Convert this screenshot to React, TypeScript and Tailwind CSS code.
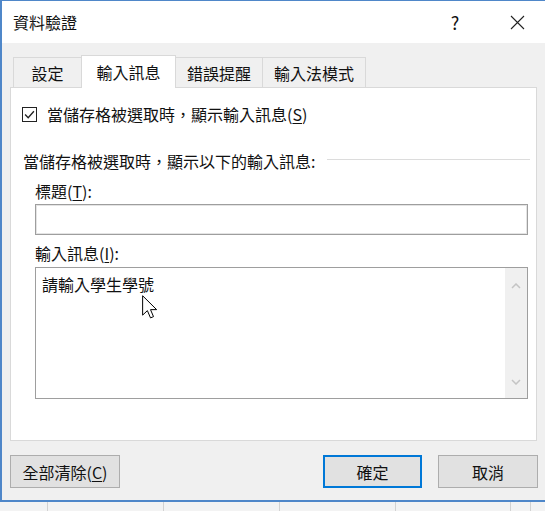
import React from 'react';

function Chevron({ up }: { up?: boolean }) {
  return (
    <svg width="10" height="6" viewBox="0 0 10 6">
      <path
        d={up ? 'M1 5 L5 1 L9 5' : 'M1 1 L5 5 L9 1'}
        fill="none"
        stroke="#c4c4c4"
        strokeWidth="1.5"
      />
    </svg>
  );
}

function Key({ k }: { k: string }) {
  return (
    <>
      (<span className="underline underline-offset-2">{k}</span>)
    </>
  );
}

export default function App() {
  return (
    <div className="w-[545px] h-[511px] overflow-hidden flex flex-col bg-[#f4f4f4] text-[16px] leading-[18px] text-[#111] font-['Noto_Sans_CJK_TC','Noto_Sans',sans-serif]">
      {/* Dialog */}
      <div className="h-[502px] w-[545px] flex flex-col border-t border-l-2 border-b-2 border-[#4f87c9]">
        {/* Title bar */}
        <div className="h-[42px] bg-white flex items-center pl-[11px] pr-[20px]">
          <span className="flex-1">資料驗證</span>
          <span className="w-[20px] mr-[45px] text-center text-[18px]">?</span>
          <svg width="15" height="15" viewBox="0 0 15 15">
            <path d="M1 1 L14 14 M14 1 L1 14" stroke="#222" strokeWidth="1.1" />
          </svg>
        </div>

        {/* Body */}
        <div className="flex-1 bg-[#f0f0f0] pl-[8px] pt-[12px]">
          {/* Tabs */}
          <div className="flex items-end h-[32px] pl-[3px]">
            <div className="w-[69px] h-[30px] border border-b-0 border-[#d9d9d9] flex items-center justify-center">
              設定
            </div>
            <div className="w-[95px] h-[33px] -mb-px -ml-px bg-white border border-b-0 border-[#d9d9d9] relative z-10 flex items-center justify-center">
              輸入訊息
            </div>
            <div className="w-[88px] h-[30px] -ml-px border border-b-0 border-[#d9d9d9] flex items-center justify-center">
              錯誤提醒
            </div>
            <div className="w-[104px] h-[30px] -ml-px border border-b-0 border-[#d9d9d9] flex items-center justify-center">
              輸入法模式
            </div>
          </div>

          {/* Panel */}
          <div className="w-[527px] h-[354px] bg-white border border-[#d9d9d9] pt-[17px]">
            <div className="h-[18px] flex items-center pl-[11px]">
              <div className="w-[15px] h-[15px] border border-[#222] bg-white flex items-center justify-center">
                <svg width="11" height="9" viewBox="0 0 10 8">
                  <path d="M1 4 L3.8 7 L9 1" fill="none" stroke="#222" strokeWidth="1.2" />
                </svg>
              </div>
              <span className="ml-[10px]">
                當儲存格被選取時，顯示輸入訊息<Key k="S" />
              </span>
            </div>

            <div className="mt-[29px] h-[18px] flex items-center pl-[12px] pr-[6px]">
              <span>當儲存格被選取時，顯示以下的輸入訊息:</span>
              <div className="flex-1 ml-[12px] mb-[3px] h-px bg-[#dcdcdc]" />
            </div>

            <div className="mt-[12px] h-[18px] pl-[24px]">
              標題<Key k="T" />:
            </div>
            <div className="mt-[4px] ml-[24px] w-[493px] h-[31px] border border-[#9e9e9e] shadow-[inset_0_0_0_1px_#e4e4e4] bg-white" />

            <div className="mt-[9px] h-[18px] pl-[24px]">
              輸入訊息<Key k="I" />:
            </div>
            <div className="mt-[5px] ml-[24px] w-[493px] h-[132px] border border-[#9e9e9e] bg-white flex relative">
              <div className="flex-1 pl-[6px] pt-[7px]">請輸入學生學號</div>
              <div className="w-[22px] bg-[#f0f0f0] flex flex-col items-center justify-between pt-[15px] pb-[13px]">
                <Chevron up />
                <Chevron />
              </div>
              <svg
                width="15"
                height="24"
                viewBox="0 0 12 19"
                className="absolute left-[106px] top-[27px]"
              >
                <path
                  d="M0.5 0.5 V16 L4.3 12.4 L6.8 18.2 L9.2 17.2 L6.8 11.6 H11.7 Z"
                  fill="#fff"
                  stroke="#000"
                  strokeWidth="0.8"
                  strokeLinejoin="round"
                />
              </svg>
            </div>
          </div>

          {/* Buttons */}
          <div className="mt-[14px] flex w-[528px]">
            <button className="w-[110px] h-[33px] bg-[#e1e1e1] border border-[#adadad] text-[16px]">
              全部清除<Key k="C" />
            </button>
            <button className="ml-auto w-[99px] h-[33px] bg-[#e1e1e1] border-2 border-[#0078d7] text-[16px]">
              確定
            </button>
            <button className="ml-[16px] w-[100px] h-[33px] bg-[#e1e1e1] border border-[#adadad] text-[16px]">
              取消
            </button>
          </div>
        </div>
      </div>

      {/* Excel grid behind */}
      <div className="flex-1 flex bg-[#f3f3f3]">
        <div className="w-[47px]" />
        <div className="w-px bg-[#d2d2d2]" />
        <div className="w-[115px]" />
        <div className="w-px bg-[#d2d2d2]" />
        <div className="w-[115px]" />
        <div className="w-px bg-[#d2d2d2]" />
        <div className="w-[115px]" />
        <div className="w-px bg-[#d2d2d2]" />
        <div className="w-[114px]" />
        <div className="w-px bg-[#d2d2d2]" />
        <div className="w-[19px]" />
        <div className="w-px bg-[#d2d2d2]" />
      </div>
    </div>
  );
}
